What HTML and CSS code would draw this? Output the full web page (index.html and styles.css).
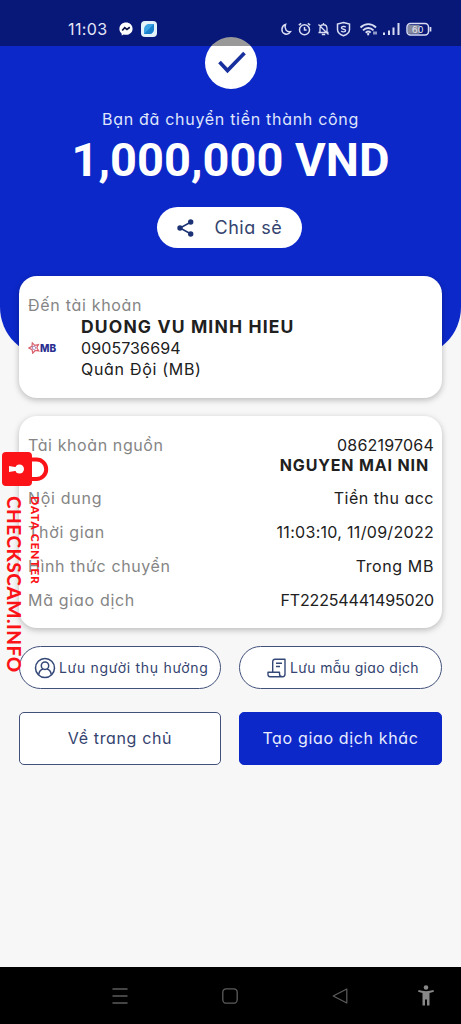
FILE: index.html
```html
<!DOCTYPE html>
<html lang="vi">
<head>
<meta charset="utf-8">
<title>Chuyển tiền thành công</title>
<link rel="stylesheet" href="styles.css">
</head>
<body>
<div class="screen">
  <div class="statusbar">
    <div class="status-left">
      <span class="clock">11:03</span>
      <svg class="messenger" width="14" height="14" viewBox="0 0 14 14"><path d="M7 .5C3.2.5.4 3.200.4 6.700c0 2 .8 3.600 2.200 4.800l.2 1.900 1.900-.9c.7.2 1.500.3 2.300.3 3.800 0 6.600-2.600 6.600-6.100S10.800.5 7 .5z" fill="#fff"/><path d="M3.200 8.500l2.500-2.800 2.200 1.800 2.900-2.200" fill="none" stroke="#0a1445" stroke-width="1.700"/></svg>
      <svg width="16" height="16" viewBox="0 0 16 16"><rect width="16" height="16" rx="4" fill="#e4f3fa"/><path d="M3 13V8.500C3 5 5.500 3 8.500 3H13v4.500c0 3.500-2 5.500-5 5.500z" fill="#3ba3e2"/><path d="M3 13l10-10v4.500c0 3.500-2 5.500-5 5.500z" fill="#1b80cc"/></svg>
    </div>
    <svg class="status-icons" width="154" height="18" viewBox="0 0 154 18" fill="none" stroke="#d9dcf2" stroke-width="1.500">
      <path d="M5.500 4.500C1 6 .8 12.200 4.600 13.700c2.200.9 4.700 0 5.900-2C6.500 12.300 4 8.500 5.500 4.500z"/>
      <circle cx="24.500" cy="9.700" r="5"/><path d="M24.500 7v3h2.200M18.800 5.200l2.400-1.900M30.200 5.200l-2.400-1.900"/>
      <path d="M38.500 12.500h10M40 12V8.500c0-5 7-5 7 0V12M43.500 3v2M41.800 14.500h3.400M38.500 4.500l10 10" stroke-width="1.300"/>
      <path d="M63.500 2.500l6 1.500v5.500c0 3.200-2.400 5-6 6.300-3.600-1.300-6-3.100-6-6.300V4z"/><path d="M65.700 7.200c-1-1.200-4.300-1-4.300.6 0 2 4.200.8 4.200 2.700 0 1.700-3.400 1.700-4.400.5" stroke-width="1.400"/>
      <path d="M80.500 7.500c4.500-4.500 11-4.500 15.500 0M83 10.300c3-3 7.500-3 10.500 0M85.700 12.700c1.500-1.300 3.700-1.300 5 0" stroke-width="1.900"/><path d="M88.200 13v2.300" stroke-width="2"/><path d="M94 11.500v3m2-3v3" stroke-width="1.300"/>
      <path d="M104 12.500V15m5-4.500V15m4.500-7.500V15m5-12v12" stroke-width="2"/>
      <rect x="127" y="3.500" width="21.500" height="11.500" rx="3.500"/><path d="M128 5h11.500v8.800H128z" fill="#85899d" stroke="none"/><path d="M150.500 7v4.500" stroke-width="1.700"/>
      <text class="battery" x="137.700" y="12.500" text-anchor="middle">60</text>
    </svg>
  </div>

  <header class="hero">
    <svg class="check" width="52" height="52" viewBox="0 0 52 52"><circle cx="26" cy="26" r="26" fill="#fff"/><path d="M14.500 25l8 8.500L39.500 16" fill="none" stroke="#18309d" stroke-width="3.700"/></svg>
    <p class="hero-message">Bạn đã chuyển tiền thành công</p>
    <p class="amount">1,000,000 VND</p>
    <div class="share">
      <svg width="17" height="18" viewBox="0 0 17 18"><path d="M14 3L3 9l11 6" fill="none" stroke="#1d3274" stroke-width="1.500"/><g fill="#1d3274"><circle cx="13.700" cy="3" r="2.700"/><circle cx="3" cy="9" r="2.700"/><circle cx="13.700" cy="15" r="2.700"/></g></svg>
      <span>Chia sẻ</span>
    </div>
  </header>

  <main class="content">
    <section class="card recipient">
      <p class="label to">Đến tài khoản</p>
      <div class="recipient-row">
        <div class="bank">
          <svg width="12" height="12" viewBox="0 0 12 12" fill="none"><path d="M4.300.8l2.500 2.500 3.600-.8-1.600 3.300 2 3.100-3.600-.4-2.500 2.700-.6-3.600L.8 6l3.200-1.700z" stroke="#d9606c" stroke-width="1.200"/><path d="M4.600 4.500l2.200-.3 1 1.900-1.500 1.500-1.900-.9z" stroke="#6c4a98" stroke-width=".6"/></svg>
          <span>MB</span>
        </div>
        <div class="recipient-info">
          <strong class="to-name">DUONG VU MINH HIEU</strong>
          <span class="to-number">0905736694</span>
          <span class="to-bank">Quân Đội (MB)</span>
        </div>
      </div>
    </section>

    <section class="card details">
      <div class="row source"><span class="label l-source">Tài khoản nguồn</span><span class="value"><span class="v-number">0862197064</span><strong>NGUYEN MAI NIN</strong></span></div>
      <div class="row"><span class="label l-content">Nội dung</span><span class="value v-content">Tiền thu acc</span></div>
      <div class="row"><span class="label l-time">Thời gian</span><span class="value v-time">11:03:10, 11/09/2022</span></div>
      <div class="row"><span class="label l-method">Hình thức chuyển</span><span class="value v-method">Trong MB</span></div>
      <div class="row"><span class="label l-code">Mã giao dịch</span><span class="value v-code">FT22254441495020</span></div>
    </section>

    <div class="actions">
      <div class="pill pill-person">
        <svg width="22" height="22" viewBox="0 0 22 22" fill="none" stroke="#344878" stroke-width="1.500"><circle cx="11" cy="11" r="9.500"/><circle cx="11" cy="8.700" r="3.700"/><path d="M4.700 17.600c.5-3.300 2.200-5.100 4.500-5.500M17.300 17.600c-.5-3.300-2.200-5.100-4.500-5.500"/></svg>
        <span>Lưu người thụ hưởng</span>
      </div>
      <div class="pill pill-template">
        <svg width="20" height="20" viewBox="0 0 20 20" fill="none" stroke="#344878" stroke-width="1.400" stroke-linejoin="round"><path d="M5.700 14V4c0-1.700.8-2.800 2.300-2.800h10V16c0 1.800-.8 2.700-2.300 2.700H3c-1.500 0-2-1-2-2.500V14.300h11.500V16c0 1.800 1.200 2.700 3 2.700M9 5.200h6M9 8.500h4"/></svg>
        <span>Lưu mẫu giao dịch</span>
      </div>
      <div class="button home">Về trang chủ</div>
      <div class="button primary">Tạo giao dịch khác</div>
    </div>
  </main>

  <nav class="navbar">
    <svg width="16" height="18" viewBox="0 0 16 18" stroke="#5c5c5c" stroke-width="1.300"><path d="M.5 2h15M.5 9h15M.5 16h15"/></svg>
    <svg width="16" height="18" viewBox="0 0 16 18" fill="none" stroke="#5c5c5c" stroke-width="1.300"><rect x=".8" y="1.800" width="14.400" height="14.400" rx="3.500"/></svg>
    <svg width="16" height="18" viewBox="0 0 16 18" fill="none" stroke="#5c5c5c" stroke-width="1.200" stroke-linejoin="round"><path d="M14.800 2v14L1.200 9z"/></svg>
    <svg class="accessibility" width="16" height="21" viewBox="0 0 16 21" fill="#888"><circle cx="8" cy="2.500" r="2.300"/><path d="M.5 5C5 6.500 11 6.500 15.500 5l.4 1.800L11.500 8v12.500H9V14.500H7v6H4.500V8L.1 6.800z"/></svg>
  </nav>

  <aside class="watermark">
    <svg width="48" height="36" viewBox="0 0 48 36"><path d="M29 8.500h5.500a9.700 9.700 0 0 1 0 19.400H29" fill="none" stroke="#fb1318" stroke-width="4"/><rect y="1" width="30" height="34" rx="4" fill="#fb1318"/><circle cx="17.500" cy="18" r="4.500" fill="#fff"/><path d="M16 16.500L7 15v6l9-1.500z" fill="#fff"/></svg>
    <div class="watermark-text"><span class="brand">CHECKSCAM.INFO</span><span class="tagline">DATA CENTER</span></div>
  </aside>
</div>
</body>
</html>
```
FILE: styles.css
```css
* { box-sizing: border-box; }
body { margin: 0; }
p { margin: 0; }
svg { display: block; flex: none; }

.screen {
  position: relative;
  width: 461px;
  height: 1024px;
  display: flex;
  flex-direction: column;
  overflow: hidden;
  background: #f7f7f7;
  font-family: Inter, "Noto Sans", sans-serif;
  font-feature-settings: "cv11", "calt" 0;
  font-size: 16px;
  line-height: 22px;
  white-space: nowrap;
  color: #202020;
}

.statusbar {
  position: absolute;
  inset: 0 0 auto 0;
  height: 46px;
  padding: 12px 27px 0 68px;
  display: flex;
  justify-content: space-between;
  align-items: center;
  background: rgba(0, 0, 0, .4);
}
.status-left { display: flex; align-items: center; gap: 8px; color: #e3e5f7; }
.clock { width: 43px; font-size: 16px; letter-spacing: .4px; }
.battery { font: 9px Inter, sans-serif; fill: #e4e4ed; stroke: none; }

.hero {
  flex: none;
  height: 357px;
  padding-top: 37px;
  display: flex;
  flex-direction: column;
  align-items: center;
  border-radius: 0 0 50px 50px;
  background: #0c28c9;
  color: #fff;
}
.hero-message { margin-top: 19px; letter-spacing: .7px; color: #dfe5fb; }
.amount {
  margin-top: 5px;
  font: 700 47px/50px Roboto, sans-serif;
}
.share {
  width: 145px;
  height: 41px;
  margin: 22px 3px 0 0;
  padding-left: 20px;
  display: flex;
  align-items: center;
  gap: 21px;
  border-radius: 21px;
  background: #fff;
  color: #34436f;
  font-size: 18px;
  letter-spacing: .5px;
}

.content {
  margin-top: -81px;
  padding: 0 19px;
  display: flex;
  flex-direction: column;
  gap: 18px;
}
.card {
  border-radius: 18px;
  background: #fff;
  box-shadow: 0 2px 6px rgba(0, 0, 0, .25);
}
.label { color: #858585; letter-spacing: .7px; }
.l-source, .l-method { letter-spacing: .6px; }
.recipient { height: 122px; padding: 18px 9px 0; }
.recipient-row { display: grid; grid-template-columns: 53px 1fr; align-items: center; }
.bank { display: flex; align-items: center; font-size: 10px; font-weight: 800; color: #2b2f91; }
.recipient-info { display: flex; flex-direction: column; line-height: 21.500px; letter-spacing: .5px; }
.to-name { font-size: 17.500px; font-weight: 700; letter-spacing: 1.150px; }
.to-number { letter-spacing: .1px; }
.to-bank { letter-spacing: .7px; }

.details {
  height: 212px;
  padding: 18px 8px 0 9px;
  display: flex;
  flex-direction: column;
  gap: 12px;
}
.row { display: flex; justify-content: space-between; }
.source { height: 41px; }
.value { letter-spacing: .3px; text-align: right; }
.source .value { display: flex; flex-direction: column; line-height: 20px; padding-top: 1px; }
.source strong { padding-right: 5px; font-weight: 700; letter-spacing: .850px; }
.v-number { letter-spacing: .2px; }
.v-content { letter-spacing: .5px; }
.v-method { letter-spacing: .6px; }
.v-code { letter-spacing: -.150px; }

.actions { display: grid; grid-template-columns: 202px 203px; gap: 23px 18px; }
.pill {
  height: 43px;
  display: flex;
  align-items: center;
  gap: 3px;
  border: 1px solid #42517a;
  border-radius: 22px;
  background: #fff;
  color: #34436f;
  font-size: 14px;
}
.pill-person { padding-left: 14px; letter-spacing: .7px; }
.pill-template { padding-left: 27px; letter-spacing: .350px; }
.button {
  height: 53px;
  padding-bottom: 2px;
  display: flex;
  align-items: center;
  justify-content: center;
  border: 1px solid #42517a;
  border-radius: 5px;
  background: #fff;
  color: #34436f;
  letter-spacing: .650px;
}
.primary { border-color: #0c28c9; background: #0c28c9; color: #e8edff; }

.navbar {
  height: 57px;
  margin-top: auto;
  padding: 0 27px 0 112px;
  display: grid;
  grid-template-columns: 110px 110px 86px 16px;
  align-items: center;
  background: #000;
}

.watermark { position: absolute; left: 2px; top: 451px; color: #fb1318; }
.watermark-text { display: flex; margin-top: 9px; font-family: Lato, sans-serif; font-weight: 900; }
.watermark-text span { writing-mode: vertical-rl; }
.brand { width: 24px; line-height: 24px; font-size: 19px; letter-spacing: .550px; }
.tagline { width: 18px; line-height: 18px; font-size: 12px; letter-spacing: .8px; }
```
